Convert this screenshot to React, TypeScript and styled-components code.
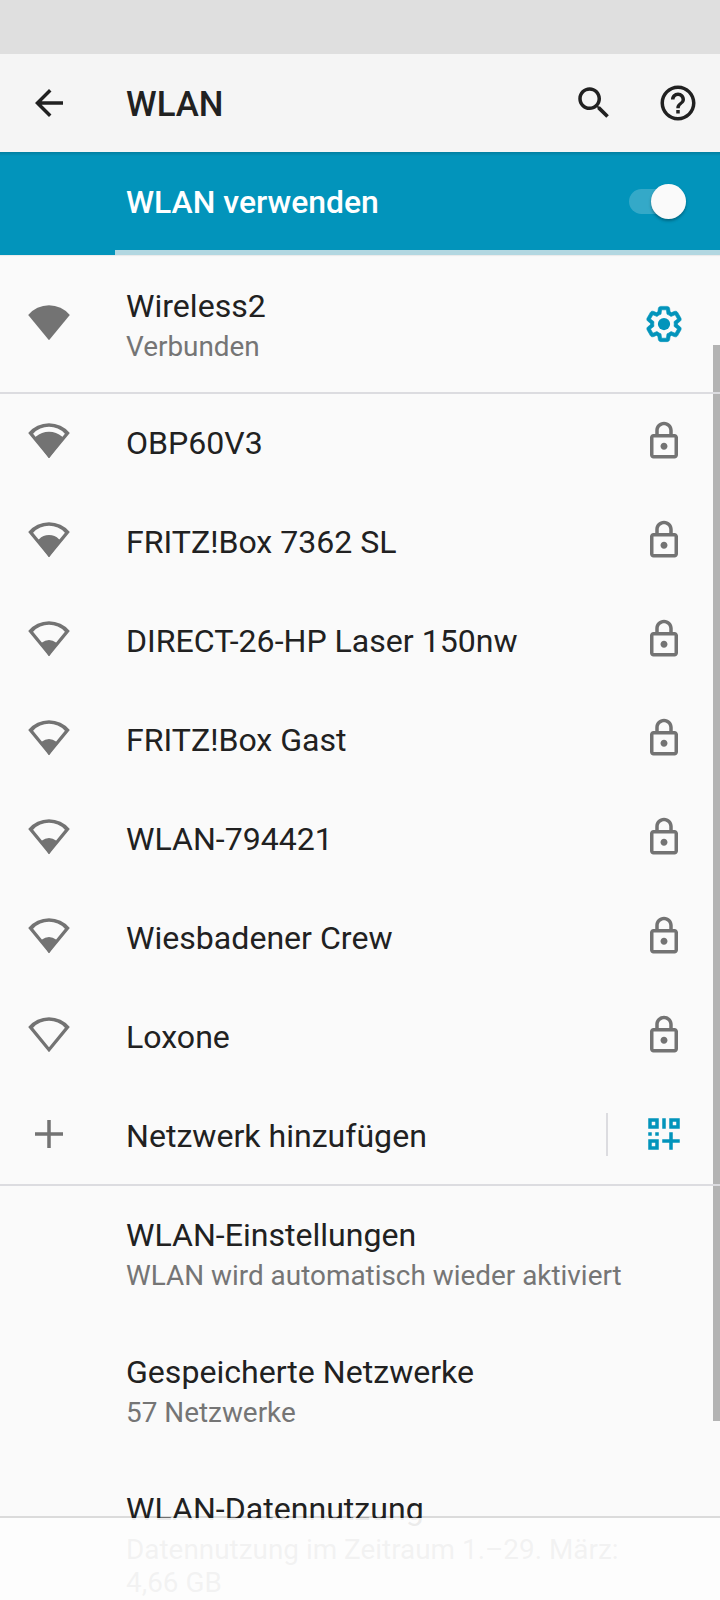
import React from "react";
import styled, { createGlobalStyle } from "styled-components";

const accent = "#0294bb";
const textPrimary = "#212121";
const textSecondary = "#757575";

const GlobalStyle = createGlobalStyle`
  * { box-sizing: border-box; }
  body {
    margin: 0;
    background: #fafafa;
    font-family: Roboto, "Liberation Sans", sans-serif;
  }
`;

const Screen = styled.div`
  position: relative;
  display: flex;
  flex-direction: column;
  width: 720px;
  height: 1600px;
  overflow: hidden;
  background: #fafafa;
  color: ${textPrimary};
`;

const StatusBar = styled.div`
  flex: none;
  height: 54px;
  background: #dfdfdf;
`;

const Toolbar = styled.header`
  flex: none;
  display: flex;
  align-items: center;
  height: 98px;
  padding-right: 21px;
  background: #f5f5f5;
`;

const IconButton = styled.button`
  display: flex;
  padding: 0;
  border: 0;
  background: none;
  color: ${textPrimary};
`;

const BackButton = styled(IconButton)`
  justify-content: center;
  width: 98px;
`;

const Actions = styled.div`
  display: flex;
  gap: 42px;
`;

const ScreenTitle = styled.h1`
  flex: 1;
  margin: 2px 0 0 28px;
  font-size: 34.8px;
  font-weight: 500;
  line-height: 42px;
`;

const SwitchBar = styled.div`
  flex: none;
  display: flex;
  align-items: center;
  height: 98px;
  padding: 0 34px 0 126px;
  background: linear-gradient(rgba(0, 0, 0, 0.15), rgba(0, 0, 0, 0) 4px) ${accent};
  color: #fff;
`;

const SwitchLabel = styled.span`
  flex: 1;
  padding-top: 2px;
  font-size: 31.9px;
  font-weight: 500;
  line-height: 42px;
`;

const SwitchTrack = styled.button`
  display: flex;
  align-items: center;
  justify-content: flex-end;
  width: 57px;
  height: 25px;
  margin-top: 1px;
  padding: 0;
  border: 0;
  border-radius: 13px;
  background: rgba(255, 255, 255, 0.2);
`;

const SwitchThumb = styled.span`
  flex: none;
  width: 35px;
  height: 35px;
  border-radius: 50%;
  background: #fafafa;
  box-shadow: 0 2px 3px rgba(0, 0, 0, 0.3);
`;

const Progress = styled.div`
  flex: none;
  height: 5px;
  background: #b2d7e1;
  box-shadow: 0 1px 1px rgba(0, 0, 0, 0.06);
`;

const ProgressValue = styled.div`
  width: 115px;
  height: 100%;
  background: ${accent};
`;

const Group = styled.section<{ $divided?: boolean }>`
  flex: none;
  position: relative;
  display: flex;
  flex-direction: column;

  &::before {
    content: "";
    display: ${(p) => (p.$divided ? "block" : "none")};
    position: absolute;
    z-index: 2;
    top: 0;
    left: 0;
    right: 0;
    height: 2px;
    background: #dcdce0;
  }
`;

const Row = styled.div<{ $tall?: boolean }>`
  display: flex;
  align-items: center;
  height: ${(p) => (p.$tall ? 137 : 99)}px;
`;

const LeadSlot = styled.div`
  flex: none;
  display: flex;
  justify-content: center;
  width: 98px;
  padding-bottom: 1px;
  color: #737373;
`;

const TextBlock = styled.div`
  flex: 1;
  min-width: 0;
  margin-left: 28px;
`;

const RowTitle = styled.div`
  padding-top: 4px;
  font-size: 32.1px;
  line-height: 41px;
  white-space: nowrap;
`;

const RowSummary = styled.div`
  padding: 3px 0;
  font-size: 27.9px;
  line-height: 33px;
  color: ${textSecondary};
`;

const SummaryLine = styled.div`
  white-space: nowrap;
`;

const TrailSlot = styled.div<{ $accent?: boolean; $raised?: boolean }>`
  flex: none;
  display: flex;
  justify-content: center;
  width: 112px;
  padding-bottom: ${(p) => (p.$raised ? 1 : 0)}px;
  color: ${(p) => (p.$accent ? accent : "#737373")};
`;

const VerticalRule = styled.div`
  flex: none;
  width: 2px;
  height: 43px;
  background: #dcdce0;
`;

const LongRow = styled(Row)`
  height: 170px;
`;

const ScrollThumb = styled.div`
  position: absolute;
  z-index: 1;
  top: 345px;
  right: 0;
  width: 7px;
  height: 1076px;
  background: #b3b3b3;
`;

const NavigationBar = styled.nav`
  position: absolute;
  z-index: 3;
  left: 0;
  right: 0;
  bottom: 0;
  height: 84px;
  border-top: 2px solid rgba(0, 0, 0, 0.12);
  background: rgba(253, 253, 253, 0.92);
  background-clip: padding-box;
`;

const Glyph = ({ d, children }: { d?: string; children?: React.ReactNode }) => (
  <svg width="42" height="42" viewBox="0 0 24 24" fill="currentColor">
    {d && <path d={d} />}
    {children}
  </svg>
);

const paths = {
  back: "M20 11H7.83l5.59-5.59L12 4l-8 8 8 8 1.41-1.41L7.83 13H20v-2z",
  search:
    "M15.5 14h-.79l-.28-.27C15.41 12.59 16 11.11 16 9.5 16 5.91 13.09 3 9.5 3S3 5.91 3 9.5 5.91 16 9.5 16c1.61 0 3.09-.59 4.23-1.57l.27.28v.79l5 4.99L20.49 19l-4.99-5zm-6 0C7.01 14 5 11.99 5 9.5S7.01 5 9.5 5 14 7.01 14 9.5 11.99 14 9.5 14z",
  help: "M11 18h2v-2h-2v2zm1-16C6.48 2 2 6.48 2 12s4.48 10 10 10 10-4.48 10-10S17.52 2 12 2zm0 18c-4.41 0-8-3.59-8-8s3.59-8 8-8 8 3.59 8 8-3.59 8-8 8zm0-14c-2.21 0-4 1.79-4 4h2c0-1.1.9-2 2-2s2 .9 2 2c0 2-3 1.75-3 5h2c0-2.25 3-2.5 3-5 0-2.21-1.79-4-4-4z",
  lock: "M18 8h-1V6c0-2.76-2.24-5-5-5S7 3.24 7 6v2H6c-1.1 0-2 .9-2 2v10c0 1.1.9 2 2 2h12c1.1 0 2-.9 2-2V10c0-1.1-.9-2-2-2zM9 6c0-1.66 1.34-3 3-3s3 1.34 3 3v2H9V6zm9 14H6V10h12v10zm-6-3c1.1 0 2-.9 2-2s-.9-2-2-2-2 .9-2 2 .9 2 2 2z",
  plus: "M20 13h-7v7h-2v-7H4v-2h7V4h2v7h7v2z",
  gear: "M13.85,22.25h-3.7c-0.74,0-1.36-0.54-1.45-1.27l-0.27-1.89c-0.27-0.14-0.53-0.29-0.79-0.46l-1.8,0.72c-0.7,0.26-1.47-0.03-1.81-0.65L2.2,15.53c-0.35-0.66-0.2-1.44,0.36-1.88l1.53-1.19c-0.01-0.15-0.02-0.3-0.02-0.46c0-0.15,0.01-0.31,0.02-0.46l-1.52-1.19C1.98,9.9,1.83,9.09,2.2,8.47l1.85-3.19c0.34-0.62,1.11-0.9,1.79-0.63l1.81,0.73c0.26-0.17,0.52-0.32,0.78-0.46l0.27-1.91c0.09-0.7,0.71-1.25,1.44-1.25h3.7c0.74,0,1.36,0.54,1.45,1.27l0.27,1.89c0.27,0.14,0.53,0.29,0.79,0.46l1.8-0.72c0.71-0.26,1.48,0.03,1.82,0.65l1.84,3.18c0.36,0.66,0.2,1.44-0.36,1.88l-1.52,1.19c0.01,0.15,0.02,0.3,0.02,0.46s-0.01,0.31-0.02,0.46l1.52,1.19c0.56,0.45,0.72,1.23,0.37,1.86l-1.86,3.22c-0.34,0.62-1.11,0.9-1.8,0.63l-1.8-0.72c-0.26,0.17-0.52,0.32-0.78,0.46l-0.27,1.91C15.21,21.71,14.59,22.25,13.85,22.25z M10.62,20.25h2.76l0.37-2.55l0.53-0.22c0.44-0.18,0.88-0.44,1.34-0.78l0.45-0.34l2.38,0.96l1.38-2.4l-2.03-1.58l0.07-0.56c0.03-0.26,0.06-0.51,0.06-0.78c0-0.27-0.03-0.53-0.06-0.78l-0.07-0.56l2.03-1.58l-1.39-2.4l-2.39,0.96l-0.45-0.35c-0.42-0.32-0.87-0.58-1.33-0.77L13.75,6.3l-0.37-2.55h-2.76L10.25,6.3L9.72,6.51C9.28,6.7,8.84,6.95,8.38,7.3L7.93,7.63L5.55,6.68L4.16,9.07l2.03,1.58l-0.07,0.56C6.09,11.47,6.06,11.74,6.06,12c0,0.26,0.02,0.53,0.06,0.78l0.07,0.56l-2.03,1.58l1.38,2.4l2.39-0.96l0.45,0.35c0.43,0.33,0.86,0.58,1.33,0.77l0.53,0.22L10.62,20.25z",
  qr: "M3 3h6v6h-6zM5 5v2h2v-2zM11 3h2v6h-2zM15 3h6v6h-6zM17 5v2h2v-2zM3 11h2v2h-2zM7 11h2v2h-2zM3 15h6v6h-6zM5 17v2h2v-2zM15 11h2v4h4v2h-4v4h-2v-4h-4v-2h4z",
};

const fan = "M21 35.2 L0.2 10 A27 27 0 0 1 41.8 10 Z";
const fanHollow = "M21 30.2 L5.1 10.7 A21.8 21.8 0 0 1 36.9 10.7 Z";
// Filled wedge for each signal strength between empty and full.
const wedges: Record<number, string> = {
  1: "M21 35.2 L13 23 L14 21.5 A11 11 0 0 1 28 21.5 L29 23 Z",
  2: "M21 35.2 L9 18.5 L11 17.3 A14 14 0 0 1 31 17.3 L33 18.5 Z",
  3: "M21 35.2 L6 15 L8 13.6 A20 20 0 0 1 34 13.6 L36 15 Z",
};

const WifiSignal = ({ level }: { level: number }) => (
  <svg width="42" height="36" viewBox="0 0 42 36" fill="#737373">
    <path fillRule="evenodd" d={level === 4 ? fan : `${fan} ${fanHollow}`} />
    {wedges[level] && <path d={wedges[level]} />}
  </svg>
);

const networks = [
  { name: "OBP60V3", level: 3 },
  { name: "FRITZ!Box 7362 SL", level: 2 },
  { name: "DIRECT-26-HP Laser 150nw", level: 1 },
  { name: "FRITZ!Box Gast", level: 1 },
  { name: "WLAN-794421", level: 1 },
  { name: "Wiesbadener Crew", level: 1 },
  { name: "Loxone", level: 0 },
];

export default function App() {
  return (
    <Screen>
      <GlobalStyle />
      <StatusBar />
      <Toolbar>
        <BackButton aria-label="Zurück">
          <Glyph d={paths.back} />
        </BackButton>
        <ScreenTitle>WLAN</ScreenTitle>
        <Actions>
          <IconButton aria-label="Suchen">
            <Glyph d={paths.search} />
          </IconButton>
          <IconButton aria-label="Hilfe">
            <Glyph d={paths.help} />
          </IconButton>
        </Actions>
      </Toolbar>
      <SwitchBar>
        <SwitchLabel>WLAN verwenden</SwitchLabel>
        <SwitchTrack role="switch" aria-checked="true" aria-label="WLAN verwenden">
          <SwitchThumb />
        </SwitchTrack>
      </SwitchBar>
      <Progress>
        <ProgressValue />
      </Progress>

      <Group>
        <Row $tall>
          <LeadSlot>
            <WifiSignal level={4} />
          </LeadSlot>
          <TextBlock>
            <RowTitle>Wireless2</RowTitle>
            <RowSummary>Verbunden</RowSummary>
          </TextBlock>
          <TrailSlot $accent>
            <Glyph>
              <path
                d={paths.gear}
                stroke="currentColor"
                strokeWidth="0.35"
                transform="translate(12 12) scale(0.983) translate(-12 -12)"
              />
              <circle cx="12" cy="12" r="3.5" />
            </Glyph>
          </TrailSlot>
        </Row>
      </Group>

      <Group $divided>
        {networks.map((n) => (
          <Row key={n.name}>
            <LeadSlot>
              <WifiSignal level={n.level} />
            </LeadSlot>
            <TextBlock>
              <RowTitle>{n.name}</RowTitle>
            </TextBlock>
            <TrailSlot $raised>
              <Glyph d={paths.lock} />
            </TrailSlot>
          </Row>
        ))}
        <Row>
          <LeadSlot>
            <Glyph d={paths.plus} />
          </LeadSlot>
          <TextBlock>
            <RowTitle>Netzwerk hinzufügen</RowTitle>
          </TextBlock>
          <VerticalRule />
          <TrailSlot $accent $raised>
            <svg width="42" height="42" viewBox="0 0 24 24" fill="currentColor" fillRule="evenodd">
              <path d={paths.qr} />
            </svg>
          </TrailSlot>
        </Row>
      </Group>

      <Group $divided>
        <Row $tall>
          <LeadSlot />
          <TextBlock>
            <RowTitle>WLAN-Einstellungen</RowTitle>
            <RowSummary>WLAN wird automatisch wieder aktiviert</RowSummary>
          </TextBlock>
        </Row>
        <Row $tall>
          <LeadSlot />
          <TextBlock>
            <RowTitle>Gespeicherte Netzwerke</RowTitle>
            <RowSummary>57 Netzwerke</RowSummary>
          </TextBlock>
        </Row>
        <LongRow>
          <LeadSlot />
          <TextBlock>
            <RowTitle>WLAN-Datennutzung</RowTitle>
            <RowSummary>
              <SummaryLine>Datennutzung im Zeitraum 1.–29. März:</SummaryLine>
              <SummaryLine>4,66 GB</SummaryLine>
            </RowSummary>
          </TextBlock>
        </LongRow>
      </Group>

      <ScrollThumb />
      <NavigationBar />
    </Screen>
  );
}
